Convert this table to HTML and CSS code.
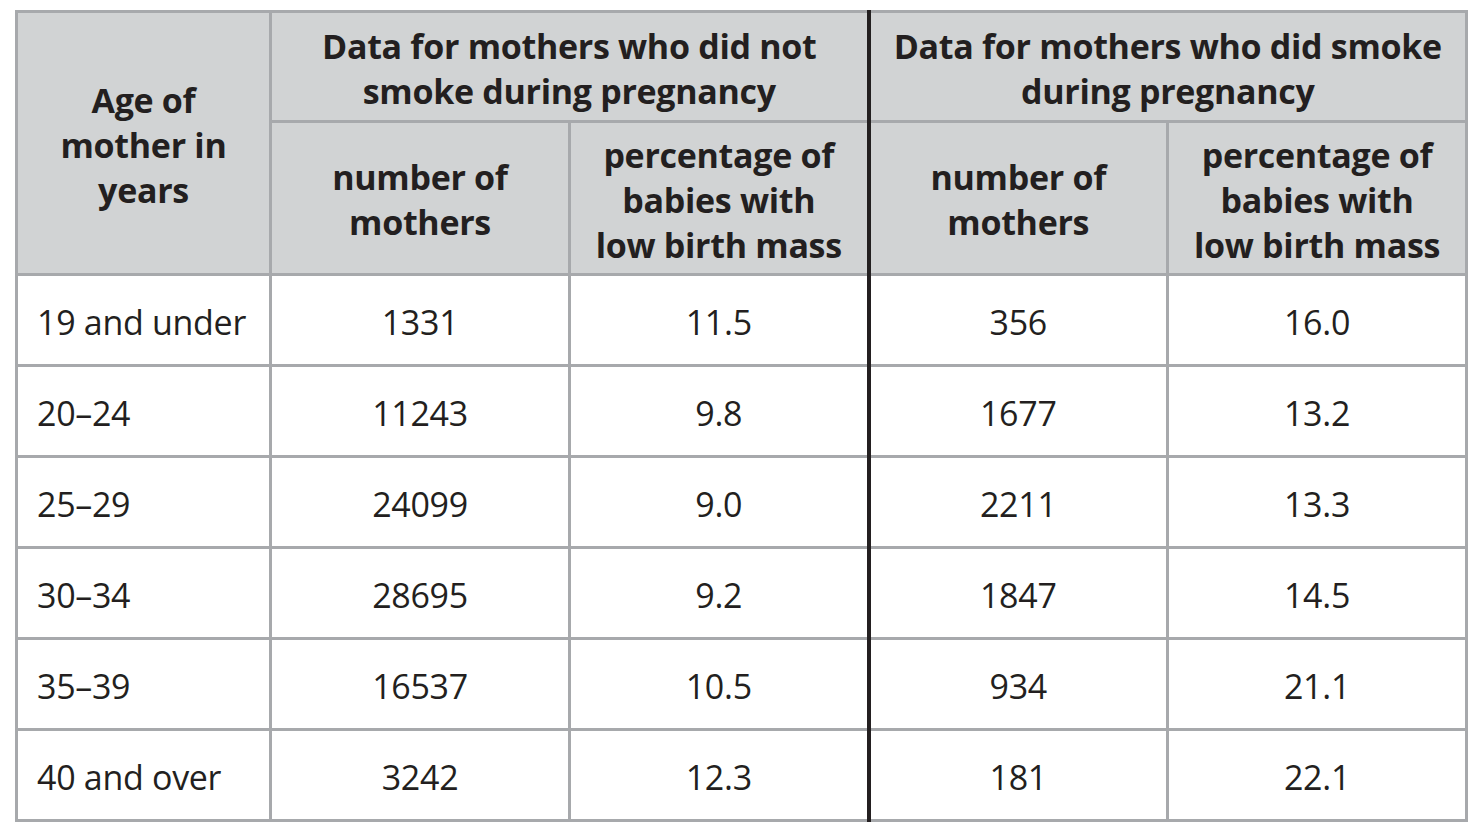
FILE: index.html
```html
<!DOCTYPE html>
<html lang="en">
<head>
<meta charset="utf-8">
<title>Low birth mass data</title>
<link rel="stylesheet" href="styles.css">
</head>
<body>
<table class="data">
  <colgroup>
    <col class="c-age">
    <col class="c-num">
    <col class="c-pct">
    <col class="c-num">
    <col class="c-pct">
  </colgroup>
  <thead>
    <tr class="h1">
      <th rowspan="2" class="age-h">Age of<br>mother in<br>years</th>
      <th colspan="2" class="group">Data for mothers who did not<br>smoke during pregnancy</th>
      <th colspan="2" class="group split">Data for mothers who did smoke<br>during pregnancy</th>
    </tr>
    <tr class="h2">
      <th>number of<br>mothers</th>
      <th>percentage of<br>babies with<br>low birth mass</th>
      <th class="split">number of<br>mothers</th>
      <th>percentage of<br>babies with<br>low birth mass</th>
    </tr>
  </thead>
  <tbody>
    <tr><td class="age">19 and under</td><td>1331</td><td>11.5</td><td class="split">356</td><td>16.0</td></tr>
    <tr><td class="age">20–24</td><td>11243</td><td>9.8</td><td class="split">1677</td><td>13.2</td></tr>
    <tr><td class="age">25–29</td><td>24099</td><td>9.0</td><td class="split">2211</td><td>13.3</td></tr>
    <tr><td class="age">30–34</td><td>28695</td><td>9.2</td><td class="split">1847</td><td>14.5</td></tr>
    <tr><td class="age">35–39</td><td>16537</td><td>10.5</td><td class="split">934</td><td>21.1</td></tr>
    <tr><td class="age">40 and over</td><td>3242</td><td>12.3</td><td class="split">181</td><td>22.1</td></tr>
  </tbody>
</table>
</body>
</html>
```

FILE: styles.css
```css
html, body {
  margin: 0;
  padding: 0;
  background: #ffffff;
}

body {
  padding: 10px 0 0 15px;
  font-family: "Open Sans", "Noto Sans", sans-serif;
  color: #231f20;
}

.data {
  border-collapse: collapse;
  table-layout: fixed;
  width: 1453px;
  border: 3px solid #a7a9ac;
}

.c-age { width: 254px; }
.c-num { width: 299px; }
.c-pct { width: 299px; }

.data th,
.data td {
  border: 3px solid #a7a9ac;
  padding: 4px 0 0 0;
  text-align: center;
  vertical-align: middle;
}

.data th {
  background: #d1d3d4;
  font-weight: 700;
  font-size: 34px;
  line-height: 45px;
  letter-spacing: -0.3px;
}

.data .h1 th.group {
  height: 103px;
}

.data .h2 th {
  height: 146px;
}

.data td {
  font-size: 34px;
  line-height: 40px;
  height: 84px;
  font-weight: 400;
  letter-spacing: -0.3px;
}

.data td.age {
  text-align: left;
  padding-left: 19px;
}

.data .split {
  border-left: 4px solid #231f20;
}
```
